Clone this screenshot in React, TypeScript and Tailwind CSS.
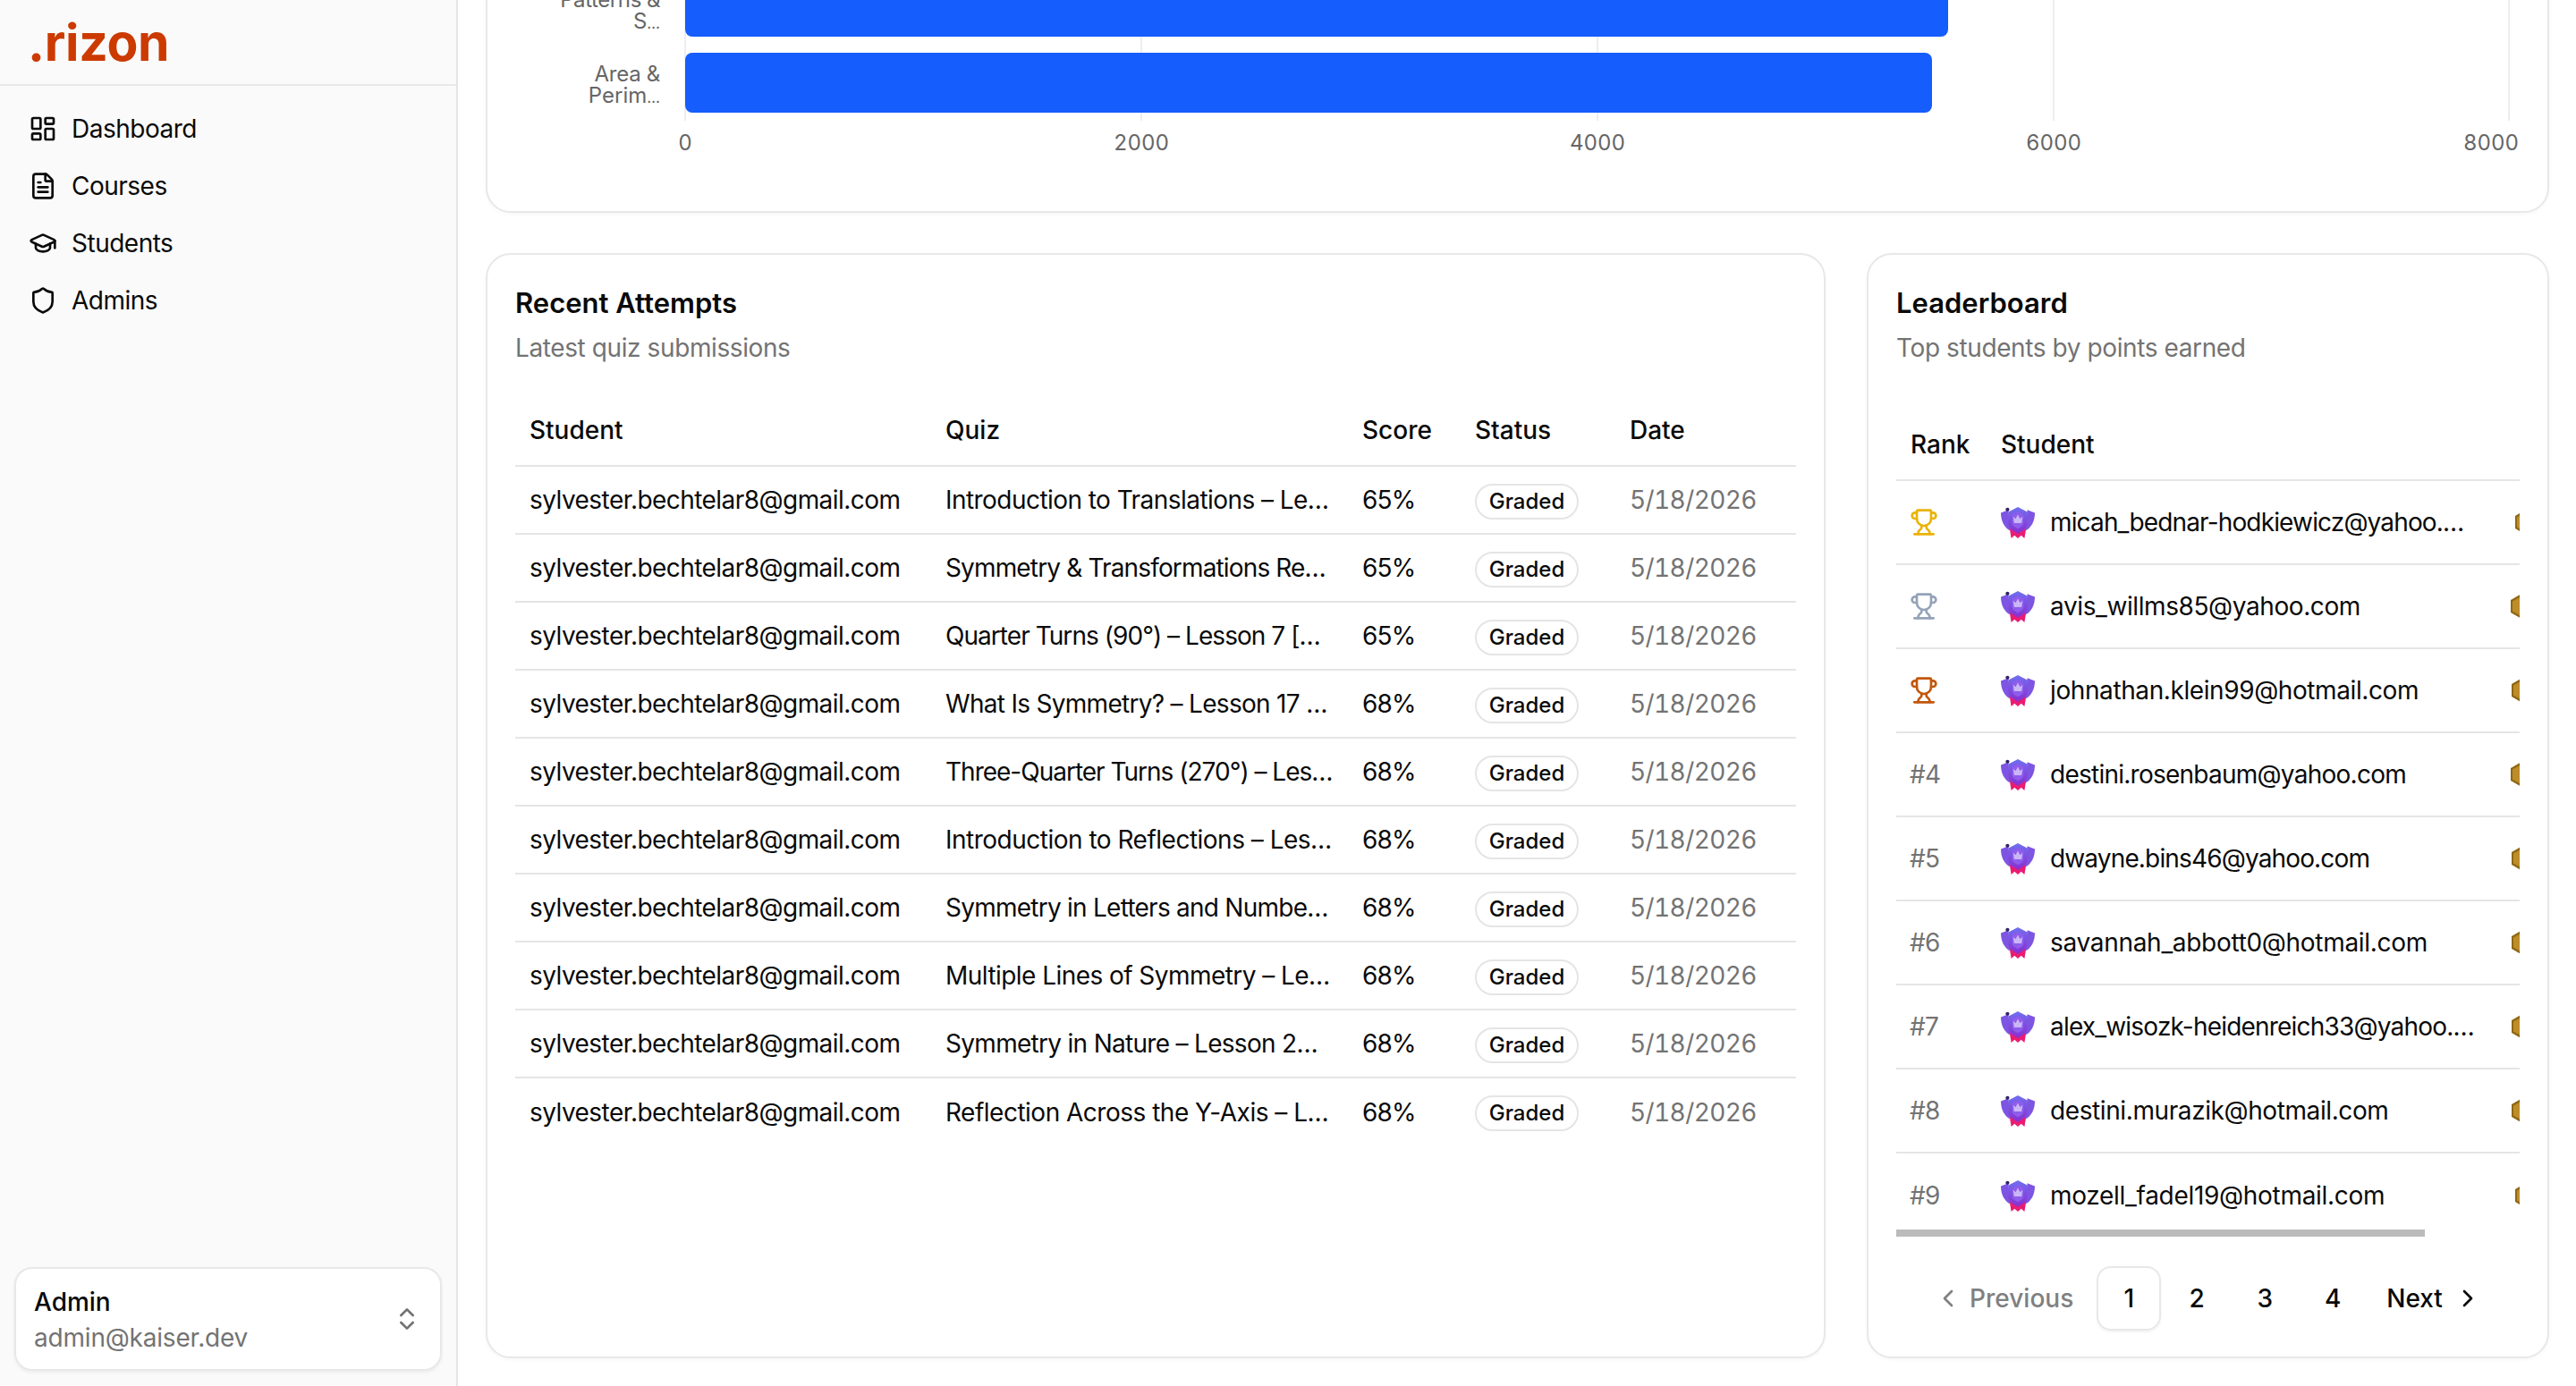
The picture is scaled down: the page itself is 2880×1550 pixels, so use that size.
import { useId } from "react";
import {
  ChevronLeft,
  ChevronRight,
  ChevronsUpDown,
  FileText,
  GraduationCap,
  LayoutDashboard,
  Shield,
  Trophy,
} from "lucide-react";

const navItems = [
  { label: "Dashboard", icon: LayoutDashboard },
  { label: "Courses", icon: FileText },
  { label: "Students", icon: GraduationCap },
  { label: "Admins", icon: Shield },
];

const attempts = [
  { quiz: "Introduction to Translations – Le…", score: "65%", text: "tracking-[-0.55px]" },
  { quiz: "Symmetry & Transformations Re…", score: "65%", text: "tracking-[-0.85px]" },
  { quiz: "Quarter Turns (90°) – Lesson 7 […", score: "65%", text: "tracking-[-0.95px]" },
  { quiz: "What Is Symmetry? – Lesson 17 …", score: "68%", text: "tracking-[-0.7px]" },
  { quiz: "Three-Quarter Turns (270°) – Les…", score: "68%", text: "tracking-[-1px]" },
  { quiz: "Introduction to Reflections – Les…", score: "68%", text: "tracking-[-0.5px]" },
  { quiz: "Symmetry in Letters and Numbe…", score: "68%", text: "tracking-[-0.75px]" },
  { quiz: "Multiple Lines of Symmetry – Le…", score: "68%", text: "tracking-[-0.55px]" },
  { quiz: "Symmetry in Nature – Lesson 2…", score: "68%", text: "tracking-[-0.7px]" },
  { quiz: "Reflection Across the Y-Axis – L…", score: "68%", text: "tracking-[-0.5px]" },
];

const leaders = [
  { email: "micah_bednar-hodkiewicz@yahoo.…", coin: "ml-[5px]", text: "tracking-[-0.85px]" },
  { email: "avis_willms85@yahoo.com", coin: "ml-0", text: "tracking-[-0.4px]" },
  { email: "johnathan.klein99@hotmail.com", coin: "ml-px", text: "tracking-[-0.4px]" },
  { email: "destini.rosenbaum@yahoo.com", coin: "ml-0", text: "tracking-[-0.75px]" },
  { email: "dwayne.bins46@yahoo.com", coin: "ml-px", text: "tracking-[-0.85px]" },
  { email: "savannah_abbott0@hotmail.com", coin: "ml-px", text: "tracking-[-0.3px]" },
  { email: "alex_wisozk-heidenreich33@yahoo.…", coin: "ml-px", text: "tracking-[-0.8px]" },
  { email: "destini.murazik@hotmail.com", coin: "ml-px", text: "tracking-[-0.4px]" },
  { email: "mozell_fadel19@hotmail.com", coin: "ml-[5px]", text: "tracking-[-0.3px]" },
];

const trophyColors = ["text-[#eab308]", "text-[#94a3b8]", "text-[#c2570c]"];

function ShieldBadge() {
  const id = useId();
  return (
    <svg width="38" height="36" viewBox="0 0 36 34" className="shrink-0">
      <defs>
        <linearGradient id={id} x1="0" y1="0" x2="0" y2="1">
          <stop offset="0" stopColor="#6f70f0" />
          <stop offset="1" stopColor="#8a2ed0" />
        </linearGradient>
      </defs>
      <path d="M9 22l2 12 3.500-3 3.500 3 3.500-3 3.500 3 2-12z" fill="#ea1c72" />
      <path d="M0 7l8-3 2 22C4 23 0 16 0 7zM36 7l-8-3-2 22c6-3 10-10 10-19z" fill="#7d55e2" />
      <path d="M18 1l10 5v13c0 5-5 7-10 10-5-3-10-5-10-10V6z" fill={`url(#${id})`} />
      <path d="M18 6l6 3v9c0 3-3 4-6 6-3-2-6-3-6-6V9z" fill="#8f5cec" />
      <path d="M13 11l2.600 2.400L18 9l2.400 4.400L23 11l-1 7h-8z" fill="#c9b6f7" />
      <circle cx="7" cy="3.500" r="2" fill="#2f2468" />
    </svg>
  );
}

function Coin() {
  return (
    <svg width="32" height="32" viewBox="0 0 32 32" className="shrink-0">
      <path d="M16 2l12 7v14l-12 7-12-7V9z" fill="#8f6715" />
      <path d="M16 5l10 5.500v11l-10 5.500-10-5.500v-11z" fill="#bd8d28" />
    </svg>
  );
}

function Sidebar() {
  return (
    <aside className="flex h-full w-[512px] shrink-0 flex-col border-r-2 border-[#e5e5e5] bg-[#fafafa]">
      <div className="flex h-[96px] items-center border-b-2 border-[#e8e8e8] pl-[31px]">
        <span className="text-[57px] font-bold leading-none tracking-[-0.3px] text-[#cc3a00]">.rizon</span>
      </div>
      <nav className="flex-1 p-4">
        {navItems.map((item) => (
          <a key={item.label} className="flex h-16 items-center gap-4 px-4 text-[28px] tracking-[-0.5px] text-[#0a0a0a]">
            <item.icon size={32} strokeWidth={2} />
            {item.label}
          </a>
        ))}
      </nav>
      <div className="p-4 pb-[17px]">
        <div className="flex h-[116px] items-center justify-between rounded-[20px] border-2 border-[#e8e8e8] bg-white pl-5 pr-[21px] shadow-[0_2px_4px_rgba(0,0,0,0.06)]">
          <div className="pt-px leading-[40px]">
            <div className="text-[28px] font-medium text-[#0a0a0a]">Admin</div>
            <div className="text-[28px] tracking-[-0.2px] text-[#737373]">admin@kaiser.dev</div>
          </div>
          <ChevronsUpDown size={32} className="text-[#737373]" />
        </div>
      </div>
    </aside>
  );
}

function ChartCard() {
  const grid = [766, 1276, 1786, 2296, 2805];
  const ticks = [
    { x: 766, label: "0" },
    { x: 1276, label: "2000" },
    { x: 1786, label: "4000" },
    { x: 2296, label: "6000" },
    { x: 2785, label: "8000" },
  ];
  return (
    <div className="shrink-0 rounded-[28px] border-2 border-[#e8e8e8] bg-white shadow-[0_2px_4px_rgba(0,0,0,0.03)]">
      <svg width="2303" height="292" viewBox="545 -56 2303 292" className="block tabular-nums" fontSize="24" fill="#666666">
        {grid.map((x) => (
          <line key={x} x1={x} x2={x} y1="-56" y2="135" stroke="#eeeeee" strokeWidth="2" />
        ))}
        <rect x="766" y="-26" width="1412" height="67" rx="8" fill="#155dfc" />
        <rect x="766" y="59" width="1394" height="67" rx="8" fill="#155dfc" />
        <text x="738" y="8" textAnchor="end" letterSpacing="-0.4">Patterns &amp;</text>
        <text x="738" y="32" textAnchor="end">S<tspan fontSize="17">…</tspan></text>
        <text x="738" y="91" textAnchor="end" letterSpacing="-0.2">Area &amp;</text>
        <text x="738" y="115" textAnchor="end">Perim<tspan fontSize="17">…</tspan></text>
        {ticks.map((t) => (
          <text key={t.label} x={t.x} y="168" textAnchor="middle">{t.label}</text>
        ))}
      </svg>
    </div>
  );
}

function CardHeader({ title, sub }: { title: string; sub: string }) {
  return (
    <div>
      <h2 className="text-[31px] font-semibold leading-[32px] text-[#0a0a0a]">{title}</h2>
      <p className="mt-[14px] text-[28px] leading-[40px] tracking-[-0.4px] text-[#737373]">{sub}</p>
    </div>
  );
}

function RecentAttempts() {
  return (
    <div className="w-[1498px] shrink-0 rounded-[28px] border-2 border-[#e8e8e8] bg-white pl-[31px] pt-[38px] shadow-[0_2px_4px_rgba(0,0,0,0.03)]">
      <CardHeader title="Recent Attempts" sub="Latest quiz submissions" />
      <table className="mt-[32px] w-[1432px] table-fixed text-left text-[28px] text-[#0a0a0a]">
        <colgroup>
          <col className="w-[465px]" />
          <col className="w-[466px]" />
          <col className="w-[126px]" />
          <col className="w-[173px]" />
          <col className="w-[202px]" />
        </colgroup>
        <thead>
          <tr className="h-[80px] border-b-2 border-[#e5e5e5]">
            <th className="px-4 font-medium">Student</th>
            <th className="px-4 font-medium">Quiz</th>
            <th className="px-4 font-medium">Score</th>
            <th className="px-4 font-medium">Status</th>
            <th className="px-4 font-medium">Date</th>
          </tr>
        </thead>
        <tbody className="tracking-[-0.5px]">
          {attempts.map((row, i) => (
            <tr key={row.quiz} className={i === attempts.length - 1 ? "h-[76px]" : "h-[76px] border-b-2 border-[#e5e5e5]"}>
              <td className="whitespace-nowrap px-4 tracking-[-0.55px]">sylvester.bechtelar8@gmail.com</td>
              <td className={`whitespace-nowrap px-4 ${row.text}`}>{row.quiz}</td>
              <td className="px-4 tracking-[-0.8px]">{row.score}</td>
              <td className="px-4">
                <span className="inline-flex h-10 w-[116px] items-center justify-center rounded-full border-2 border-[#e5e5e5] align-middle text-[24px] font-medium tracking-normal">
                  Graded
                </span>
              </td>
              <td className="px-4 tracking-[-0.6px] text-[#737373] tabular-nums">5/18/2026</td>
            </tr>
          ))}
        </tbody>
      </table>
    </div>
  );
}

function Leaderboard() {
  return (
    <div className="flex min-w-0 flex-1 flex-col rounded-[28px] border-2 border-[#e8e8e8] bg-white px-[31px] pt-[38px] shadow-[0_2px_4px_rgba(0,0,0,0.03)]">
      <CardHeader title="Leaderboard" sub="Top students by points earned" />
      <div className="relative mt-[49px] overflow-hidden text-[28px] text-[#0a0a0a]">
        <div className="flex h-[80px] items-center border-b-2 border-[#e5e5e5] font-medium">
          <div className="w-[101px] pl-4">Rank</div>
          <div className="pl-4">Student</div>
        </div>
        {leaders.map((row, i) => (
          <div key={row.email} className={i === leaders.length - 1 ? "flex h-[94px] items-center" : "flex h-[94px] items-center border-b-2 border-[#e5e5e5]"}>
            <div className="w-[101px] shrink-0 pl-[15px] tracking-[-0.8px] text-[#737373]">
              {i < 3 ? <Trophy size={32} className={trophyColors[i]} /> : `#${i + 1}`}
            </div>
            <div className="flex w-[582px] shrink-0 items-center gap-[17px] pl-4">
              <ShieldBadge />
              <span className={`whitespace-nowrap ${row.text}`}>{row.email}</span>
            </div>
            <div className={row.coin}>
              <Coin />
            </div>
          </div>
        ))}
        <div className="absolute bottom-[1px] left-0 h-2 w-[591px] bg-[#bbbbbb]" />
      </div>
      <div className="mt-8 flex h-[72px] items-center justify-center gap-1 text-[28px] font-medium text-[#0a0a0a]">
        <span className="flex items-center gap-2 pl-5 pr-[22px] text-[#808080]">
          <ChevronLeft size={32} />
          Previous
        </span>
        <span className="flex size-[72px] items-center justify-center rounded-[16px] border-2 border-[#e8e8e8] shadow-[0_2px_3px_rgba(0,0,0,0.05)]">1</span>
        <span className="flex size-[72px] items-center justify-center">2</span>
        <span className="flex size-[72px] items-center justify-center">3</span>
        <span className="flex size-[72px] items-center justify-center">4</span>
        <span className="flex items-center gap-3 px-5">
          Next
          <ChevronRight size={32} />
        </span>
      </div>
    </div>
  );
}

export default function App() {
  return (
    <div className="flex h-[1550px] w-[2880px] overflow-hidden bg-white font-[Inter,sans-serif]">
      <Sidebar />
      <main className="flex min-w-0 flex-1 flex-col justify-end gap-[45px] overflow-hidden pb-[31px] pl-[31px] pr-[30px]">
        <ChartCard />
        <div className="flex h-[1236px] shrink-0 gap-[46px]">
          <RecentAttempts />
          <Leaderboard />
        </div>
      </main>
    </div>
  );
}
